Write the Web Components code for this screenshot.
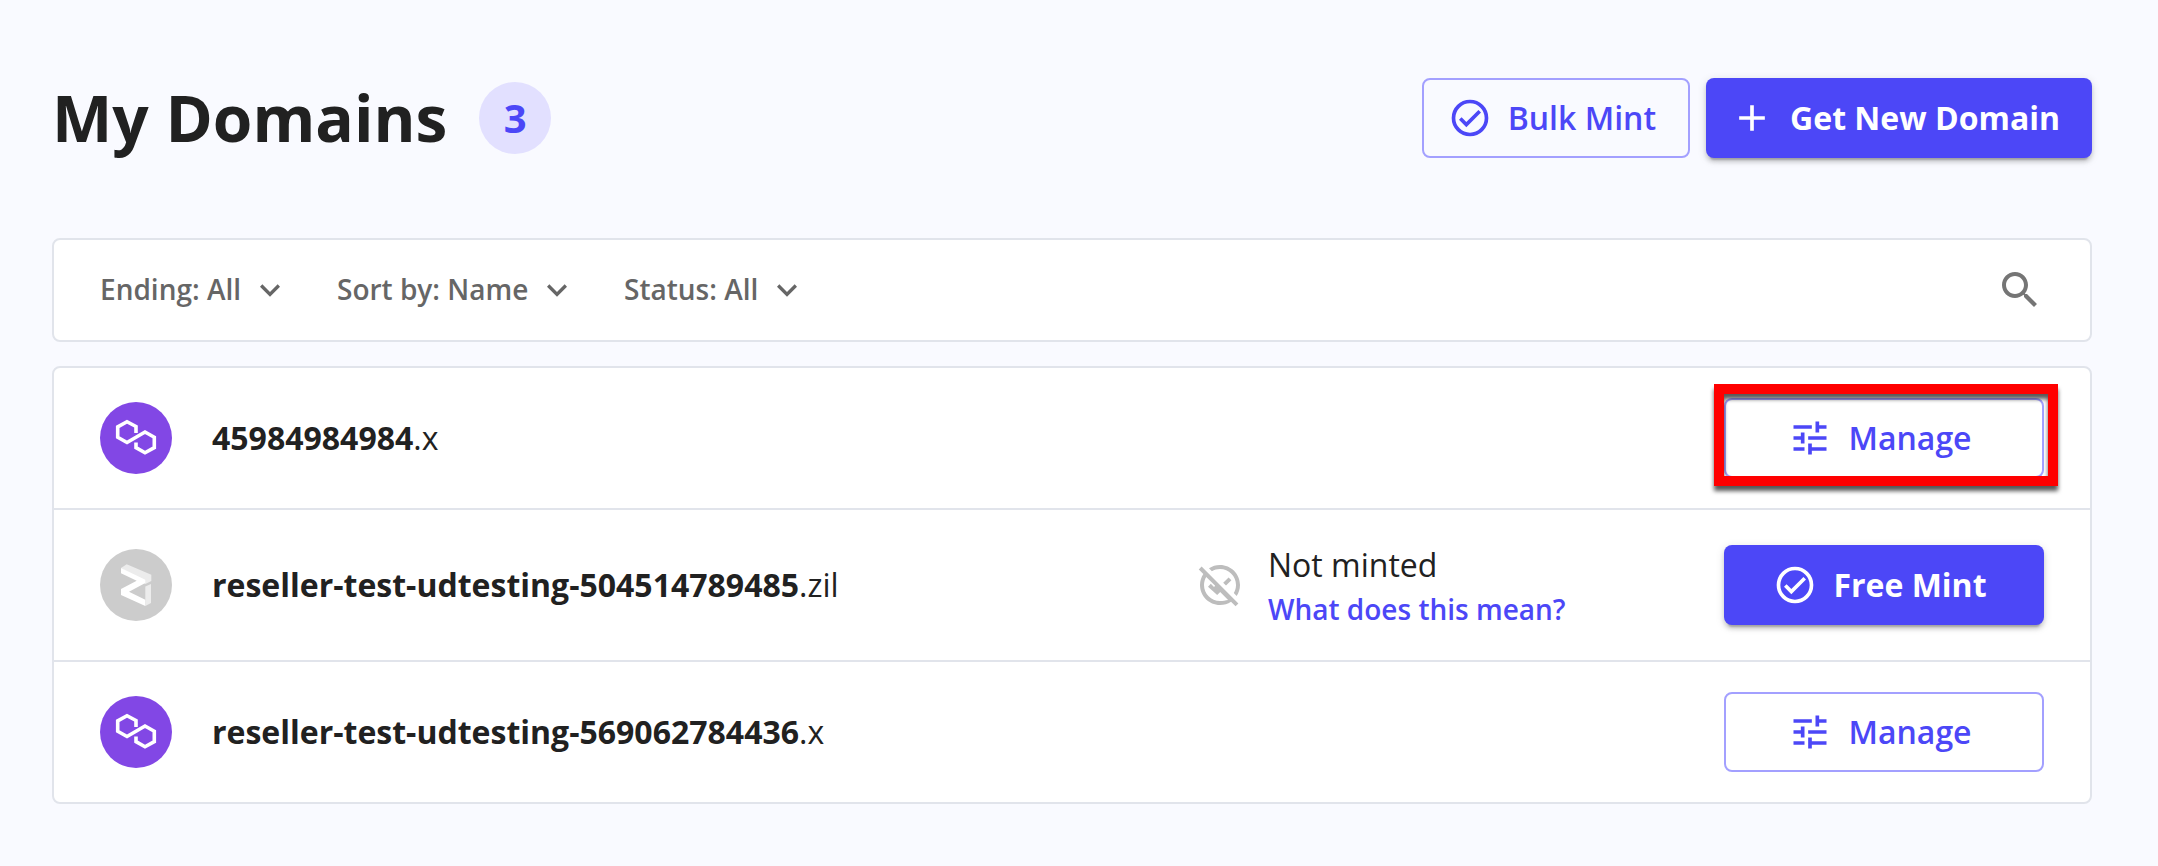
<!DOCTYPE html>
<html lang="en">
<head>
<meta charset="utf-8">
<title>My Domains</title>
<style>
  body { margin: 0; background: #f9faff; color: #212121; font-family: "Open Sans", "Noto Sans", sans-serif; font-size: 32px; }
</style>
</head>
<body>
<domains-page></domains-page>
<script>
const ICONS = {
  check: '<circle cx="12" cy="12" r="9" fill="none" stroke="currentColor" stroke-width="2"/><path d="M16.59 7.58 10 14.17l-2.59-2.58L6 13l4 4 8-8z"/>',
  plus: '<path d="M19 13h-6v6h-2v-6H5v-2h6V5h2v6h6z"/>',
  tune: '<path d="M3 17v2h6v-2H3zM3 5v2h10V5H3zm10 16v-2h8v-2h-8v-2h-2v6h2zM7 9v2H3v2h4v2h2V9H7zm14 4v-2H11v2h10zm-6-4h2V7h4V5h-4V3h-2v6z"/>',
  down: '<path d="M7.41 8.59 12 13.17l4.59-4.58L18 10l-6 6-6-6z"/>',
  search: '<path d="M15.5 14h-.79l-.28-.27C15.41 12.59 16 11.11 16 9.5 16 5.91 13.09 3 9.5 3S3 5.91 3 9.5 5.91 16 9.5 16c1.61 0 3.09-.59 4.23-1.57l.27.28v.79l5 4.99L20.49 19l-4.99-5zm-6 0C7.01 14 5 11.99 5 9.5S7.01 5 9.5 5 14 7.01 14 9.5 11.99 14 9.5 14z"/>',
  unminted: '<path d="M21.19 21.19 2.81 2.81 1.39 4.22l2.27 2.27C2.61 8.07 2 9.96 2 12c0 5.52 4.48 10 10 10 2.04 0 3.93-.61 5.51-1.66l2.27 2.27 1.41-1.42zM12 20c-4.41 0-8-3.59-8-8 0-1.48.41-2.86 1.12-4.06l4.47 4.47-.59.59L7.41 11.4 6 12.82 10.59 17l1.41-1.41.1-.1 3.96 3.97C14.86 19.59 13.48 20 12 20zM7.94 5.12 6.49 3.66C8.07 2.61 9.96 2 12 2c5.52 0 10 4.48 10 10 0 2.04-.61 3.93-1.66 5.51l-1.46-1.46C19.59 14.86 20 13.48 20 12c0-4.41-3.59-8-8-8-1.48 0-2.86.41-4.06 1.12zM13.6 10.900 16.300 8.200 17.700 9.600 15 12.300z"/>'
};

function define(name, template, init) {
  customElements.define(name, class extends HTMLElement {
    constructor() {
      super();
      this.attachShadow({ mode: 'open' });
    }
    connectedCallback() {
      if (this.shadowRoot.childNodes.length) return;
      this.shadowRoot.innerHTML = typeof template === 'function' ? template(this) : template;
      if (init) init(this, this.shadowRoot);
    }
  });
}

define('ui-icon', `
  <style>
    :host { display: block; flex: none; width: var(--icon-size, 40px); height: var(--icon-size, 40px); }
    svg { display: block; width: 100%; height: 100%; fill: currentColor; }
  </style>
  <svg viewBox="0 0 24 24" aria-hidden="true"></svg>`,
  (el, root) => { root.querySelector('svg').innerHTML = ICONS[el.getAttribute('name')]; });

define('ui-button', el => `
  <style>
    :host { display: block; position: relative; --icon-size: 44px; }
    button { box-sizing: border-box; width: 100%; height: 80px; display: flex; align-items: center; justify-content: center;
      gap: 16px; padding: 0 32px 0 24px; border: 2px solid #a3a0ff; border-radius: 8px; background: none; color: #4c47f7;
      font: 600 32px/48px "Open Sans", "Noto Sans", sans-serif; white-space: nowrap; cursor: pointer; }
    :host([primary]) button { border: 0; background: #4c47f7; color: #fff; font-weight: 700;
      box-shadow: 0 6px 2px -4px rgba(0,0,0,.2), 0 4px 4px rgba(0,0,0,.14), 0 2px 10px rgba(0,0,0,.12); }
    .mark { display: none; }
    :host([highlighted]) .mark { display: block; position: absolute; inset: -14px -14px -8px -10px; border: 10px solid #f00;
      filter: drop-shadow(0 5px 2px rgba(0,0,0,.65)); pointer-events: none; }
  </style>
  <button type="button"><ui-icon name="${el.getAttribute('icon')}"></ui-icon><span><slot></slot></span></button>
  <div class="mark"></div>`);

define('count-badge', `
  <style>
    :host { display: flex; align-items: center; justify-content: center; width: 72px; height: 72px; border-radius: 50%;
      background: #e2e0ff; color: #4c47f7; font-size: 40px; line-height: 56px; font-weight: 700; }
  </style>
  <slot></slot>`);

define('page-header', `
  <style>
    :host { display: flex; align-items: center; justify-content: space-between; }
    .title { display: flex; align-items: center; gap: 32px; }
    h1 { margin: 0; font-size: 64px; line-height: 88px; font-weight: 700; }
    .actions { display: flex; gap: 16px; }
  </style>
  <div class="title"><h1><slot></slot></h1><slot name="count"></slot></div>
  <div class="actions"><slot name="actions"></slot></div>`);

define('filter-select', `
  <style>
    :host { display: grid; align-items: center; color: #666; }
    select { grid-area: 1 / 1; appearance: none; margin: 0; padding: 0 48px 2px 0; border: 0; background: none; color: inherit;
      font: 600 28px/40px "Open Sans", "Noto Sans", sans-serif; cursor: pointer; }
    ui-icon { grid-area: 1 / 1; justify-self: end; pointer-events: none; }
  </style>
  <select><option></option></select><ui-icon name="down"></ui-icon>`,
  (el, root) => {
    root.querySelector('option').textContent = el.getAttribute('text');
    root.querySelector('select').setAttribute('aria-label', el.getAttribute('label'));
  });

define('filter-bar', `
  <style>
    :host { display: flex; align-items: center; justify-content: space-between; box-sizing: border-box; height: 104px; padding: 0 46px;
      border: 2px solid #e1e4eb; border-radius: 8px; background: #fff; }
    .filters { display: flex; gap: 47px; }
    button { padding: 0; border: 0; background: none; color: #757575; --icon-size: 48px; cursor: pointer; }
  </style>
  <div class="filters"><slot></slot></div>
  <button type="button" aria-label="Search"><ui-icon name="search"></ui-icon></button>`);

define('chain-logo', `
  <style>
    :host { display: block; }
    svg { display: block; width: 72px; height: 72px; }
    :host([chain="polygon"]) .zil, :host([chain="zilliqa"]) .pol { display: none; }
  </style>
  <svg viewBox="0 0 72 72" aria-hidden="true">
    <g class="pol"><circle cx="36" cy="36" r="36" fill="#8247e5"/>
      <path d="M36 31v-6.500l-9-4.800-9.300 5.200v10.400l9.300 5.200 18-10.500 9.300 5.200v10.400l-9.300 5.200-9-5.200v-5" fill="none" stroke="#fff" stroke-width="3.600"/></g>
    <g class="zil"><circle cx="36" cy="36" r="36" fill="#ccc"/>
      <path d="M21 19l5.700-3.700 24.600 10.400V32L45.300 35z" fill="#ececec"/>
      <path d="M45.300 37.500 51 35v19l-5.700 3z" fill="#ececec"/>
      <path d="M21 19l24.300 11.700V34L29 42.700l16.300 8V57L21 46v-6l15.700-8.300L21 24.300z" fill="#fff"/></g>
  </svg>`);

define('domain-row', `
  <style>
    :host { display: grid; grid-template-columns: 72px minmax(0, 1fr) auto 320px; align-items: center; column-gap: 40px;
      min-height: 140px; padding: 0 46px; border-bottom: 2px solid #e1e4eb; }
    :host(:last-child) { border-bottom: 0; }
    .name { line-height: 48px; }
    b { font-weight: 700; }
  </style>
  <chain-logo></chain-logo>
  <div class="name"><b></b><span></span></div>
  <div><slot name="status"></slot></div>
  <slot></slot>`,
  (el, root) => {
    root.querySelector('chain-logo').setAttribute('chain', el.getAttribute('chain'));
    root.querySelector('b').textContent = el.getAttribute('label');
    root.querySelector('.name span').textContent = el.getAttribute('ending');
  });

define('mint-status', `
  <style>
    :host { display: flex; align-items: center; gap: 24px; width: 488px; padding: 31px 0; --icon-size: 48px; }
    ui-icon { color: #bdbdbd; }
    .text { display: flex; flex-direction: column; line-height: 48px; }
    a { color: #4c47f7; font-size: 28px; line-height: 40px; font-weight: 600; text-decoration: none; }
  </style>
  <ui-icon name="unminted"></ui-icon>
  <div class="text"><span><slot></slot></span><a href="#">What does this mean?</a></div>`);

define('domain-list', `
  <style>:host { display: block; border: 2px solid #e1e4eb; border-radius: 8px; background: #fff; }</style>
  <slot></slot>`);

define('domains-page', `
  <style>
    :host { display: block; padding: 74px 66px 62px 52px; }
    filter-bar { margin-top: 76px; }
    domain-list { margin-top: 24px; }
  </style>
  <page-header>My Domains
    <count-badge slot="count">3</count-badge>
    <ui-button slot="actions" icon="check">Bulk Mint</ui-button>
    <ui-button slot="actions" icon="plus" primary>Get New Domain</ui-button>
  </page-header>
  <filter-bar>
    <filter-select label="Ending" text="Ending: All"></filter-select>
    <filter-select label="Sort by" text="Sort by: Name"></filter-select>
    <filter-select label="Status" text="Status: All"></filter-select>
  </filter-bar>
  <domain-list>
    <domain-row chain="polygon" label="45984984984" ending=".x"><ui-button icon="tune" highlighted>Manage</ui-button></domain-row>
    <domain-row chain="zilliqa" label="reseller-test-udtesting-504514789485" ending=".zil">
      <mint-status slot="status">Not minted</mint-status>
      <ui-button icon="check" primary>Free Mint</ui-button>
    </domain-row>
    <domain-row chain="polygon" label="reseller-test-udtesting-569062784436" ending=".x"><ui-button icon="tune">Manage</ui-button></domain-row>
  </domain-list>`);
</script>
</body>
</html>
